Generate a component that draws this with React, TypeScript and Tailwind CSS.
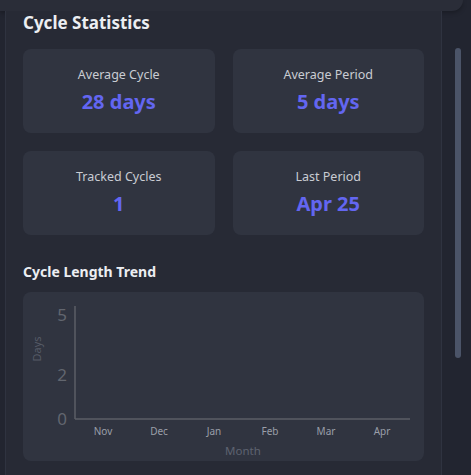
import React from "react";

const stats = [
  { label: "Average Cycle", value: "28 days" },
  { label: "Average Period", value: "5 days" },
  { label: "Tracked Cycles", value: "1" },
  { label: "Last Period", value: "Apr 25" },
];

const months = [
  { m: "Nov", x: 80 },
  { m: "Dec", x: 136 },
  { m: "Jan", x: 191 },
  { m: "Feb", x: 247 },
  { m: "Mar", x: 303 },
  { m: "Apr", x: 359 },
];

function StatCard({ label, value }: { label: string; value: string }) {
  return (
    <div className="flex h-[84px] flex-col items-center rounded-lg bg-[#303440] pt-[17px]">
      <span className="text-[12.5px] leading-[18px] text-[#c9ccd3]">{label}</span>
      <span className="mt-[4px] text-[20px] font-bold leading-[28px] text-[#6366f1]">{value}</span>
    </div>
  );
}

function TrendChart() {
  return (
    <div className="h-[169px] rounded-lg bg-[#303440]">
      <svg width="400" height="169" viewBox="0 0 400 169">
        <line x1="52" y1="14" x2="52" y2="127" stroke="#5b5e66" strokeWidth="1.5" />
        <line x1="52" y1="127" x2="387" y2="127" stroke="#5b5e66" strokeWidth="1.5" />
        <g fill="#62666f" fontSize="17" textAnchor="middle" dominantBaseline="central">
          <text x="39" y="22">5</text>
          <text x="39" y="82">2</text>
          <text x="39" y="126">0</text>
        </g>
        <text
          x="13"
          y="57"
          fill="#565b67"
          fontSize="11"
          textAnchor="middle"
          dominantBaseline="central"
          transform="rotate(-90 13 57)"
        >
          Days
        </text>
        <g fill="#9a9fa9" fontSize="10" textAnchor="middle" dominantBaseline="central">
          {months.map((d) => (
            <text key={d.m} x={d.x} y="139">
              {d.m}
            </text>
          ))}
        </g>
        <text x="220" y="158" fill="#5e6370" fontSize="11.5" textAnchor="middle" dominantBaseline="central">
          Month
        </text>
      </svg>
    </div>
  );
}

export default function App() {
  return (
    <div
      className="flex h-[475px] w-[471px] flex-col overflow-hidden bg-[#222530]"
      style={{ fontFamily: '"Segoe UI", "Noto Sans", "Open Sans", sans-serif' }}
    >
      <div className="h-[11px] w-[463px] shrink-0 rounded-br-[12px] bg-[#2a2d38] shadow-[0_2px_4px_rgba(0,0,0,0.25)]" />
      <div className="flex flex-1">
        <div className="ml-[5px] w-[437px] border-x border-[#2f3340] bg-[#272a35] pl-[17px] pr-[17px]">
          <h2 className="mt-[1px] text-[17px] font-bold leading-[22px] text-[#eceef2]">Cycle Statistics</h2>
          <div className="mt-[15px] grid grid-cols-2 gap-[18px]">
            {stats.map((s) => (
              <StatCard key={s.label} label={s.label} value={s.value} />
            ))}
          </div>
          <h3 className="mt-[28px] text-[14px] font-bold leading-[18px] text-[#eceef2]">Cycle Length Trend</h3>
          <div className="mt-[11px]">
            <TrendChart />
          </div>
        </div>
        <div className="flex flex-1 justify-center pl-[2px]">
          <div className="mt-[37px] h-[310px] w-[6px] rounded-full bg-[#4b5468]" />
        </div>
      </div>
    </div>
  );
}
